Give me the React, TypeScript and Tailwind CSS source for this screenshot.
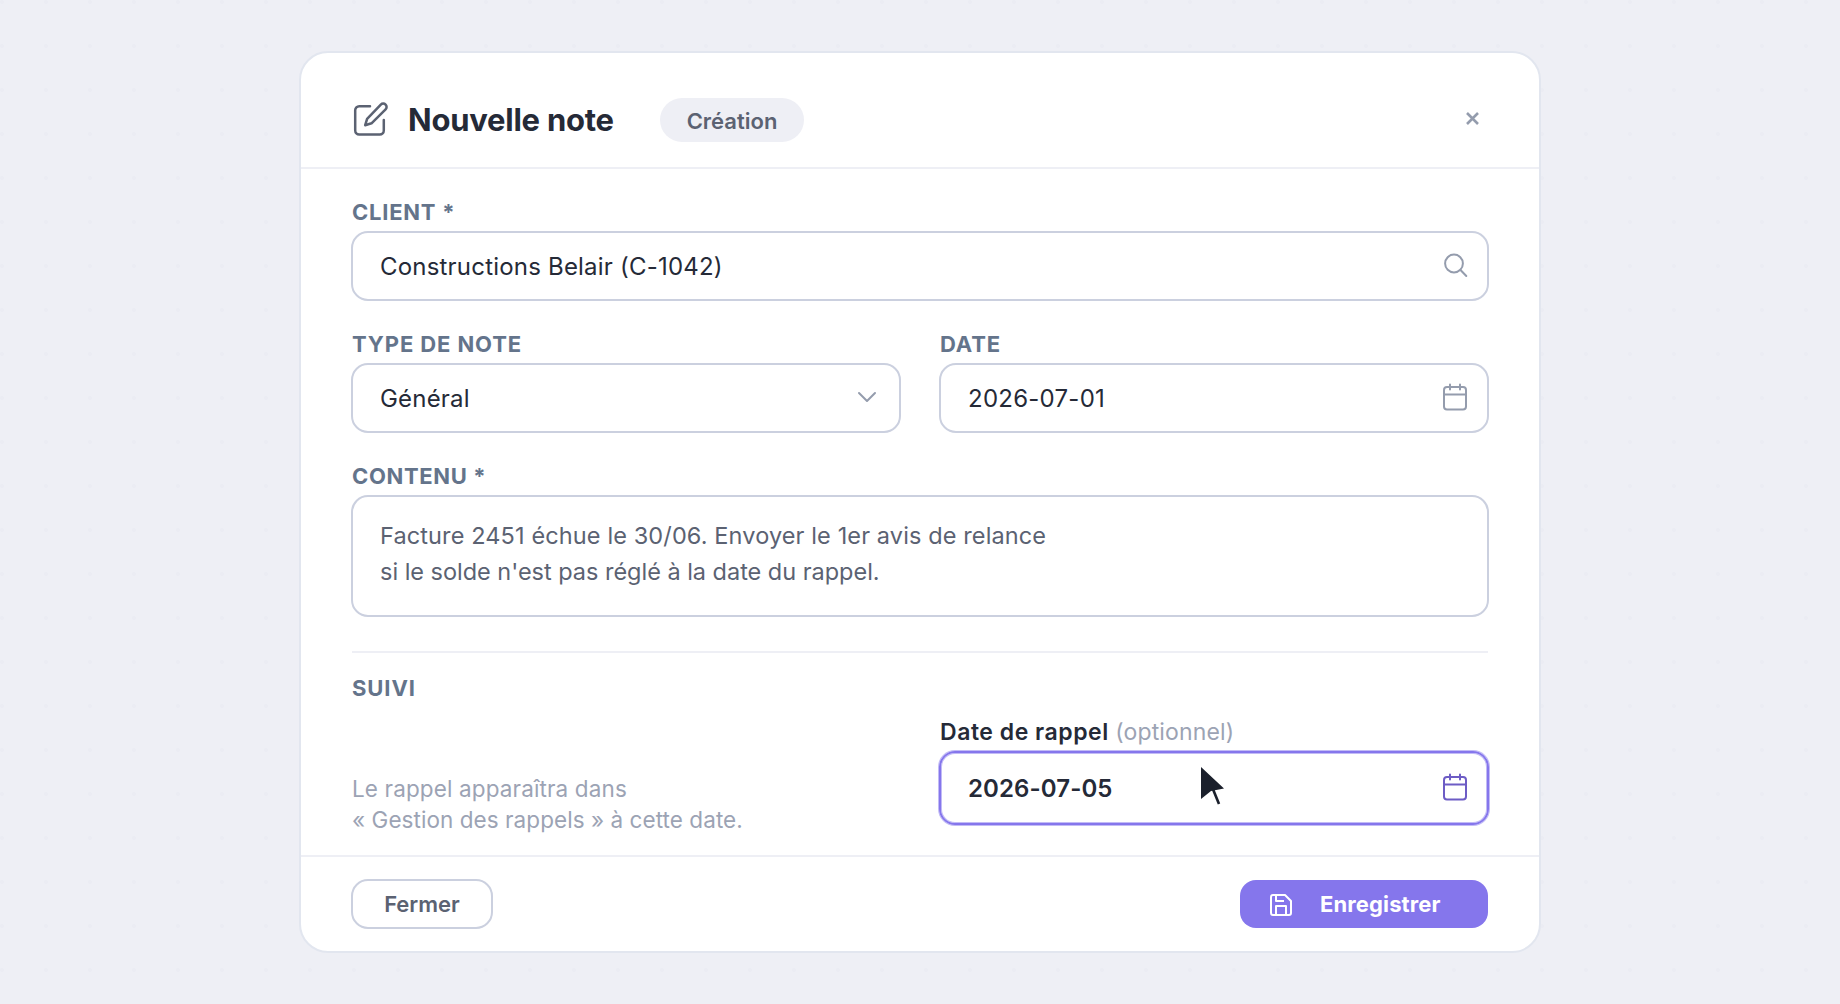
import type { ReactNode } from 'react';

const LABEL = 'pl-px text-[22px] leading-7 font-bold text-[#64748b] whitespace-nowrap';
const FIELD = 'flex items-center justify-between border-2 border-[#cbd0df] rounded-[17px] bg-white pl-[27px]';

function CalendarIcon({ className }: { className?: string }) {
  return (
    <svg width="28" height="30" viewBox="0 0 28 30" fill="none" stroke="currentColor" strokeWidth="2" strokeLinecap="round" className={className}>
      <rect x="3" y="4" width="22" height="22.5" rx="3" />
      <path d="M3 11.5h22M9 1.5v5M19 1.5v5" />
    </svg>
  );
}

function Text({ className, children }: { className?: string; children: ReactNode }) {
  return <span className={`whitespace-nowrap ${className ?? ''}`}>{children}</span>;
}

export default function App() {
  return (
    <div className="w-[1840px] h-[1004px] overflow-hidden bg-[#eeeff5] bg-[radial-gradient(circle_at_2px_2px,#ebecf3_1.8px,transparent_2.3px)] bg-[size:44px_44px] pt-[51px] pl-[299px] font-[Inter,'Liberation_Sans',sans-serif] text-[#252a37]">
      <div className="w-[1242px] h-[902px] flex flex-col border-2 border-[#e2e6ef] rounded-[29px] bg-white">
        {/* Header */}
        <div className="h-[116px] shrink-0 border-b-2 border-[#eeeff5] flex items-center pl-[51px] pr-[60px]">
          <svg width="38" height="38" viewBox="0 0 38 38" fill="none" stroke="#5b6272" strokeWidth="2.5" strokeLinecap="round" strokeLinejoin="round" className="mt-[18px]">
            <path d="M18 6.2H7.2a4 4 0 0 0-4 4v20.3a4 4 0 0 0 4 4h20.6a4 4 0 0 0 4-4V20" />
            <path d="M28.8 4.6a3.3 3.3 0 0 1 4.8 4.8L19.5 23.3l-6.3 1.9 1.9-6.4z" />
          </svg>
          <h1 className="ml-[18px] mt-[19px] w-[252px] text-[31px] leading-10 font-bold tracking-[-0.24px] whitespace-nowrap">Nouvelle note</h1>
          <div className="mt-[20px] w-[144px] h-[44px] pt-[2px] rounded-full bg-[#eeeff5] flex items-center justify-center text-[22px] font-semibold text-[#5b6272]">
            Création
          </div>
          <button className="ml-auto mt-[17px] text-[#949cad]">
            <svg width="13" height="13" viewBox="0 0 13 13" stroke="currentColor" strokeWidth="2.6">
              <path d="M1 1l11 11M12 1L1 12" />
            </svg>
          </button>
        </div>

        {/* Form */}
        <div className="h-[686px] shrink-0 px-[50px] pt-[29px] flex flex-col">
          <label className={LABEL}><Text className="tracking-[0.75px]">CLIENT *</Text></label>
          <div className={`${FIELD} mt-[5px] h-[70px] shrink-0 pr-[18px]`}>
            <Text className="pt-[2px] text-[24px] tracking-[0.2px]">Constructions Belair (C-1042)</Text>
            <svg width="26" height="26" viewBox="0 0 26 26" fill="none" stroke="#949cad" strokeWidth="2" strokeLinecap="round">
              <circle cx="11" cy="10.5" r="8.9" />
              <path d="M17.5 17l5.8 6" />
            </svg>
          </div>

          <div className="mt-[29px] grid grid-cols-2 gap-[38px]">
            <div>
              <label className={`${LABEL} block`}><Text className="tracking-[0.9px]">TYPE DE NOTE</Text></label>
              <div className={`${FIELD} mt-[5px] h-[70px] pr-[22px]`}>
                <Text className="pt-[2px] text-[24px] tracking-[0.2px]">Général</Text>
                <svg width="20" height="12" viewBox="0 0 20 12" fill="none" stroke="#949cad" strokeWidth="2" strokeLinecap="round" strokeLinejoin="round" className="-mt-[2px]">
                  <path d="M2 2l8 8 8-8" />
                </svg>
              </div>
            </div>
            <div>
              <label className={`${LABEL} block`}><Text className="tracking-[0.9px]">DATE</Text></label>
              <div className={`${FIELD} mt-[5px] h-[70px] pr-[18px]`}>
                <Text className="pt-[2px] text-[24px] tracking-[0.25px]">2026-07-01</Text>
                <CalendarIcon className="text-[#949cad]" />
              </div>
            </div>
          </div>

          <label className={`${LABEL} mt-[29px]`}><Text className="tracking-[0.65px]">CONTENU *</Text></label>
          <div className="mt-[5px] h-[122px] shrink-0 border-2 border-[#cbd0df] rounded-[17px] pl-[27px] pt-[21px] text-[23.5px] leading-9 text-[#5b6272]">
            <p className="whitespace-nowrap tracking-[0.12px]">Facture 2451 échue le 30/06. Envoyer le 1er avis de relance</p>
            <p className="whitespace-nowrap -tracking-[0.02px]">si le solde n'est pas réglé à la date du rappel.</p>
          </div>

          {/* Follow-up */}
          <div className="mt-[34px] mx-px pt-[21px] border-t-2 border-[#eeeff5] flex justify-between">
            <div>
              <h2 className="text-[22px] leading-7 font-bold text-[#64748b] tracking-[0.9px]">SUIVI</h2>
              <p className="mt-[71px] text-[22.5px] leading-[31px] text-[#9ca3b4] whitespace-nowrap">
                <Text className="tracking-[0.13px]">Le rappel apparaîtra dans</Text><br />
                <Text className="tracking-[0.06px]">« Gestion des rappels » à cette date.</Text>
              </p>
            </div>
            <div className="w-[550px] -mr-px pt-[43px]">
              <label className="block pl-px text-[23px] leading-[30px] whitespace-nowrap">
                <Text className="font-semibold tracking-[0.53px]">Date de rappel</Text>{' '}
                <Text className="text-[#9ca3b4] tracking-[0.15px]">(optionnel)</Text>
              </label>
              <div className="relative mt-[4px] h-[74px] border-2 border-[#8576ec] rounded-2xl shadow-[0_0_0_1px_#c2bbf6,inset_0_0_0_1px_#c2bbf6] flex items-center justify-between pl-[27px] pr-[18px]">
                <Text className="pt-px text-[24px] font-semibold tracking-[0.1px]">2026-07-05</Text>
                <CalendarIcon className="text-[#6d5cc5]" />
                <svg width="30" height="42" viewBox="0 0 30 42" className="absolute left-[259px] top-[13px]">
                  <path d="M1 1l23 21.5-13 2.5L1 33z" fill="#1b202c" />
                  <path d="M12.5 22l6.5 16" stroke="#1b202c" strokeWidth="2.6" />
                </svg>
              </div>
            </div>
          </div>
        </div>

        {/* Footer */}
        <div className="flex-1 border-t-2 border-[#eeeff5] flex items-center justify-between pl-[50px] pr-[51px]">
          <button className="w-[142px] h-[50px] border-2 border-[#cbd0df] rounded-[17px] text-[22px] font-semibold text-[#5b6272]">Fermer</button>
          <button className="w-[248px] h-[48px] rounded-2xl bg-[#8576ec] text-white flex items-center pl-[29px]">
            <svg width="24" height="24" viewBox="0 0 24 24" fill="none" stroke="currentColor" strokeWidth="2" strokeLinejoin="round" className="mt-[2px]">
              <path d="M4 2h12l6 6v12a2 2 0 0 1-2 2H4a2 2 0 0 1-2-2V4a2 2 0 0 1 2-2z" />
              <path d="M7 22v-9h10v9M7 2v6h8" />
            </svg>
            <Text className="ml-[27px] text-[22px] font-bold tracking-[0.12px]">Enregistrer</Text>
          </button>
        </div>
      </div>
    </div>
  );
}
